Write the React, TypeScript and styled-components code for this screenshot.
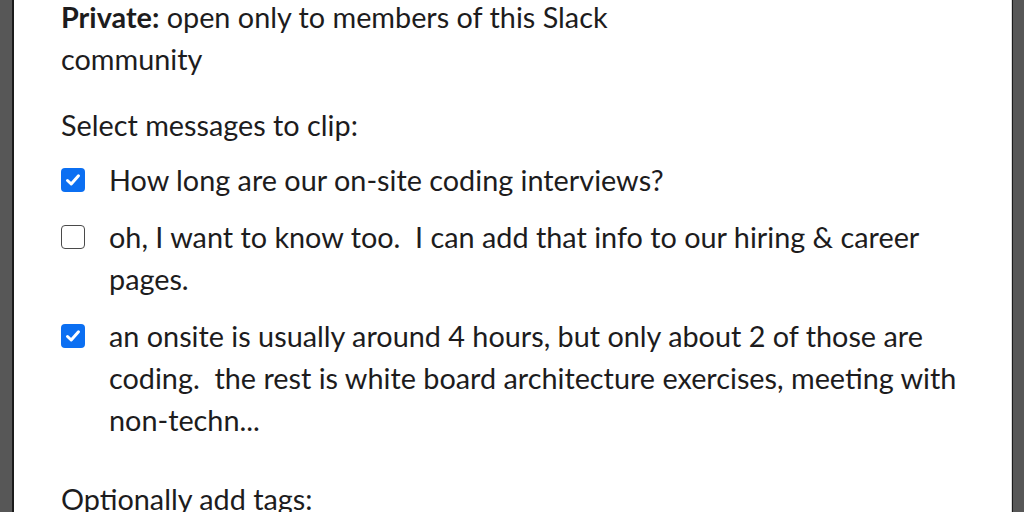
import React, { useState } from "react";
import styled, { createGlobalStyle } from "styled-components";

const Global = createGlobalStyle`
  html, body { margin: 0; padding: 0; background: #575757; }
  body { font-family: Lato, "Noto Sans", sans-serif; }
`;

const Backdrop = styled.div`
  height: 512px;
  padding: 0 11px 0 12px;
  overflow: hidden;
  background: #575757;
`;

const Dialog = styled.div`
  display: flow-root;
  height: 100%;
  box-sizing: border-box;
  background: #fff;
  border-left: 2px solid #1b1b1b;
  border-right: 1px solid #1b1b1b;
  box-shadow: inset -1px 0 0 #d8d8d8;
  padding: 0 47px;
  color: #1d1c1d;
  font-size: 28.8px;
  line-height: 42px;
`;

const Paragraph = styled.p<{ $mt?: number }>`
  margin: ${(p) => p.$mt ?? 0}px 0 0;
`;

const Intro = styled(Paragraph)`
  max-width: 580px;
`;

const Strong = styled.strong`
  font-weight: 700;
`;

const List = styled.div`
  display: flex;
  flex-direction: column;
  gap: 15px;
  margin-top: 13px;
`;

const Row = styled.label`
  display: flex;
  align-items: flex-start;
  gap: 24px;
  cursor: pointer;
`;

const Box = styled.span<{ $checked: boolean }>`
  flex: none;
  width: 24px;
  height: 24px;
  margin-top: 9px;
  box-sizing: border-box;
  border-radius: 4px;
  background: ${(p) => (p.$checked ? "#0b6ff2" : "#fff")};
  border: ${(p) => (p.$checked ? "none" : "1.6px solid #4a4a4a")};
  display: flex;
  align-items: center;
  justify-content: center;
`;

const RowText = styled.span`
  flex: 1;
`;

const items = [
  { text: "How long are our on-site coding interviews?", checked: true },
  { text: "oh, I want to know too.\u00a0 I can add that info to our hiring & career pages.", checked: false },
  {
    text: "an onsite is usually around 4 hours, but only about 2 of those are coding.\u00a0 the rest is white board architecture exercises, meeting with non-techn...",
    checked: true,
  },
];

export default function App() {
  const [state, setState] = useState(items.map((i) => i.checked));
  return (
    <>
      <Global />
      <Backdrop>
        <Dialog>
          <Intro $mt={-4}>
            <Strong>Private:</Strong> open only to members of this Slack community
          </Intro>
          <Paragraph $mt={24}>Select messages to clip:</Paragraph>
          <List>
            {items.map((it, i) => (
              <Row key={i} onClick={() => setState((s) => s.map((v, j) => (j === i ? !v : v)))}>
                <Box $checked={state[i]}>
                  {state[i] && (
                    <svg width="18" height="18" viewBox="0 0 18 18">
                      <path d="M3.5 9.5 L7.2 13 L14.5 4.8" fill="none" stroke="#fff" strokeWidth="3" strokeLinecap="round" strokeLinejoin="round" />
                    </svg>
                  )}
                </Box>
                <RowText>{it.text}</RowText>
              </Row>
            ))}
          </List>
          <Paragraph $mt={37}>Optionally add tags:</Paragraph>
        </Dialog>
      </Backdrop>
    </>
  );
}
